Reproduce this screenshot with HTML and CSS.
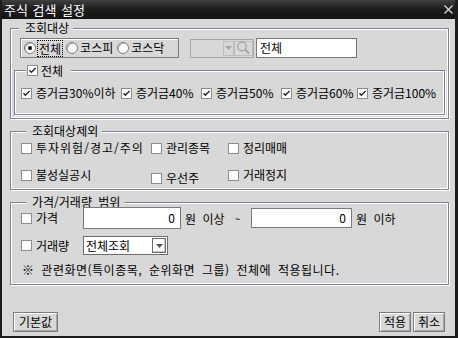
FILE: index.html
```html
<!DOCTYPE html>
<html lang="ko">
<head>
<meta charset="utf-8">
<link rel="stylesheet" href="styles.css">
</head>
<body>
<div class="window">
  <div class="titlebar">
    <span class="title">주식 검색 설정</span>
    <svg class="close" width="9" height="9" viewBox="0 0 9 9"><path d="M0.5 0.5L8.5 8.5M8.5 0.5L0.5 8.5" stroke="#dcdcdc" stroke-width="1.2"/></svg>
  </div>
  <div class="content">
    <fieldset class="group g1">
      <legend>조회대상</legend>
      <div class="market-row">
        <div class="radio-box">
          <span class="radio"><span class="rb on"></span><span class="focus">전체</span></span>
          <span class="radio"><span class="rb"></span><span>코스피</span></span>
          <span class="radio"><span class="rb"></span><span>코스닥</span></span>
        </div>
        <div class="combo">
          <span class="combo-field"></span>
          <span class="combo-arrow"><svg width="7" height="4" viewBox="0 0 7 4"><path d="M0 0H7L3.5 4Z" fill="#a4a4a4"/></svg></span>
          <span class="search-btn"><svg width="17" height="16" viewBox="0 0 17 16"><circle cx="7" cy="6.5" r="4.3" fill="none" stroke="#a2a2a2" stroke-width="1.3"/><path d="M10 9.5L14 13.5" stroke="#a2a2a2" stroke-width="2"/></svg></span>
        </div>
        <div class="textbox">전체</div>
      </div>
      <fieldset class="group inner">
        <legend class="cb-legend"><span class="cb"><svg width="9" height="9" viewBox="0 0 9 9"><path d="M1.5 4.2L3.4 6.3L7.6 2" fill="none" stroke="#222" stroke-width="1.3"/></svg></span><span>전체</span></legend>
        <div class="margin-row">
          <span class="check w100"><span class="cb"><svg width="9" height="9" viewBox="0 0 9 9"><path d="M1.5 4.2L3.4 6.3L7.6 2" fill="none" stroke="#222" stroke-width="1.3"/></svg></span><span>증거금30%이하</span></span>
          <span class="check w80"><span class="cb"><svg width="9" height="9" viewBox="0 0 9 9"><path d="M1.5 4.2L3.4 6.3L7.6 2" fill="none" stroke="#222" stroke-width="1.3"/></svg></span><span>증거금40%</span></span>
          <span class="check w80"><span class="cb"><svg width="9" height="9" viewBox="0 0 9 9"><path d="M1.5 4.2L3.4 6.3L7.6 2" fill="none" stroke="#222" stroke-width="1.3"/></svg></span><span>증거금50%</span></span>
          <span class="check w76"><span class="cb"><svg width="9" height="9" viewBox="0 0 9 9"><path d="M1.5 4.2L3.4 6.3L7.6 2" fill="none" stroke="#222" stroke-width="1.3"/></svg></span><span>증거금60%</span></span>
          <span class="check"><span class="cb"><svg width="9" height="9" viewBox="0 0 9 9"><path d="M1.5 4.2L3.4 6.3L7.6 2" fill="none" stroke="#222" stroke-width="1.3"/></svg></span><span>증거금100%</span></span>
        </div>
      </fieldset>
    </fieldset>

    <fieldset class="group g2">
      <legend>조회대상제외</legend>
      <div class="exclude-grid">
        <span class="check"><span class="cb"></span><span class="wide">투자위험/경고/주의</span></span>
        <span class="check"><span class="cb"></span><span>관리종목</span></span>
        <span class="check"><span class="cb"></span><span>정리매매</span></span>
        <span class="check"><span class="cb"></span><span>불성실공시</span></span>
        <span class="check low"><span class="cb"></span><span>우선주</span></span>
        <span class="check"><span class="cb"></span><span>거래정지</span></span>
      </div>
    </fieldset>

    <fieldset class="group g3">
      <legend>가격/거래량 범위</legend>
      <div class="price-row">
        <span class="check lbl"><span class="cb"></span><span>가격</span></span>
        <div class="num num1">0</div>
        <span class="unit1">원 이상</span>
        <span class="tilde">~</span>
        <div class="num num2">0</div>
        <span class="unit2">원 이하</span>
      </div>
      <div class="volume-row">
        <span class="check lbl"><span class="cb"></span><span>거래량</span></span>
        <div class="select">
          <span class="select-text">전체조회</span>
          <span class="select-arrow"><svg width="7" height="4" viewBox="0 0 7 4"><path d="M0 0H7L3.5 4Z" fill="#555"/></svg></span>
        </div>
      </div>
      <div class="note">※ 관련화면(특이종목, 순위화면 그룹) 전체에 적용됩니다.</div>
    </fieldset>

    <div class="footer">
      <button class="btn w-default">기본값</button>
      <div class="right-btns">
        <button class="btn w-small">적용</button>
        <button class="btn w-small">취소</button>
      </div>
    </div>
  </div>
</div>
</body>
</html>
```

FILE: styles.css
```css
* { box-sizing: border-box; }

html, body {
  margin: 0;
  padding: 0;
  background: #d8d8d8;
}

body {
  font-family: "Noto Sans CJK KR", "Noto Sans", sans-serif;
  font-size: 12px;
  color: #000;
  word-spacing: 3px;
}

.window {
  width: 458px;
  height: 338px;
  background: #d8d8d8;
  border-style: solid;
  border-color: #1c1c1c;
  border-width: 0 3px 2px 2px;
  display: flex;
  flex-direction: column;
}

.titlebar {
  height: 19px;
  flex: none;
  background: linear-gradient(#404040, #1e1e1e 45%, #141414);
  display: flex;
  align-items: center;
  justify-content: space-between;
  padding: 0 2px 0 2px;
  color: #fff;
}

.title {
  font-size: 13px;
  line-height: 19px;
  word-spacing: 1px;
}

.close { display: block; }

.content {
  padding: 3px 6px 0 8px;
  display: flex;
  flex-direction: column;
  flex: 1;
}

.group {
  margin: 0;
  padding: 0;
  min-width: 0;
  border: 1px solid #7e8292;
  box-shadow: inset 0 0 0 1px #fff, 1px 1px 0 #fff;
}

.group > legend {
  margin-left: 5px;
  padding: 0 4px 0 6px;
  line-height: 12px;
  height: 12px;
  background: #d8d8d8;
  white-space: nowrap;
}

/* group 1 */
.g1 { padding: 4px 3px 3px 3px; }

.market-row {
  display: flex;
  align-items: center;
  height: 20px;
  margin-left: 6px;
}

.radio-box {
  width: 159px;
  height: 20px;
  border: 1px solid #7c7c7c;
  box-shadow: inset 1px 1px 0 #fff;
  display: flex;
  align-items: center;
  padding-left: 3px;
}

.radio {
  display: flex;
  align-items: center;
  gap: 2px;
  margin-right: 4px;
  line-height: 14px;
}

.rb {
  width: 12px;
  height: 12px;
  border-radius: 50%;
  border: 1px solid #7a7a7a;
  background: #fff;
  box-shadow: inset 1px 1px 0 #b8b8b8;
  display: flex;
  align-items: center;
  justify-content: center;
}

.rb.on::after {
  content: "";
  width: 4px;
  height: 4px;
  border-radius: 50%;
  background: #000;
}

.focus {
  outline: 1px dotted #000;
  padding: 0 1px;
  line-height: 15px;
}

.combo {
  margin-left: 11px;
  width: 64px;
  height: 19px;
  border: 1px solid #a6a6a6;
  display: flex;
  align-items: stretch;
  background: #d8d8d8;
}

.combo-field { flex: 1; }

.combo-arrow {
  width: 11px;
  border: 1px solid #bdbdbd;
  margin: 1px 0;
  display: flex;
  align-items: center;
  justify-content: center;
}

.search-btn {
  width: 19px;
  border: 1px solid #bdbdbd;
  margin: 1px 0;
  display: flex;
  align-items: center;
  justify-content: center;
}

.textbox {
  margin-left: 2px;
  width: 101px;
  height: 20px;
  background: #fff;
  border: 1px solid #7a7a7a;
  padding-left: 3px;
  line-height: 18px;
}

.inner {
  margin-top: 6px;
  padding: 9px 3px 14px 6px;
}

.inner > legend.cb-legend {
  margin-left: 5px;
  padding: 0 8px 0 1px;
  height: 13px;
  line-height: 13px;
  display: flex;
  align-items: center;
  gap: 3px;
}

.margin-row {
  display: flex;
  align-items: center;
  height: 14px;
}

.check {
  display: flex;
  align-items: center;
  gap: 4px;
  line-height: 14px;
  white-space: nowrap;
}

.wide { letter-spacing: 1px; }

.w100 { width: 100px; }
.w80 { width: 80px; }
.w76 { width: 76px; }

.cb {
  flex: none;
  width: 11px;
  height: 11px;
  border: 1px solid #8c8c8c;
  background: #fff;
  display: flex;
  align-items: center;
  justify-content: center;
}

.cb svg { display: block; }

/* group 2 */
.g2 {
  margin-top: 6px;
  padding: 4px 3px 7px 10px;
}

.exclude-grid {
  display: grid;
  grid-template-columns: 130px 77px 1fr;
  grid-template-rows: 14px 14px;
  row-gap: 13px;
}

.check.low { position: relative; top: 3px; }

/* group 3 */
.g3 {
  margin-top: 6px;
  padding: 0 3px 7px 10px;
}

.price-row {
  display: flex;
  align-items: center;
  height: 22px;
  margin-top: -1px;
}

.lbl { width: 62px; }

.num {
  height: 22px;
  background: #fff;
  border: 1px solid #7a7a7a;
  text-align: right;
  padding-right: 5px;
  line-height: 20px;
}

.num1 { width: 98px; }
.num2 { width: 101px; height: 20px; line-height: 18px; }

.unit1 { margin-left: 4px; width: 50px; }
.tilde { width: 16px; font-size: 10px; }
.unit2 { margin-left: 4px; }

.volume-row {
  display: flex;
  align-items: center;
  height: 19px;
  margin-top: 7px;
}

.select {
  width: 85px;
  height: 19px;
  background: #fff;
  border: 1px solid #6e6e6e;
  display: flex;
  align-items: center;
  justify-content: space-between;
  padding: 0 1px 0 2px;
}

.select-text { line-height: 16px; }

.select-arrow {
  width: 14px;
  height: 15px;
  border: 1px solid #6e6e6e;
  background: #fff;
  box-shadow: inset -1px -1px 0 #c8c8c8;
  display: flex;
  align-items: center;
  justify-content: center;
}

.note {
  margin-top: 8px;
  line-height: 14px;
  padding-left: 1px;
  letter-spacing: 0.5px;
}

/* footer */
.footer {
  margin-top: 27px;
  display: flex;
  justify-content: space-between;
  align-items: center;
  padding: 0 4px 0 3px;
}

.right-btns { display: flex; gap: 2px; }

.btn {
  height: 20px;
  padding: 0;
  font-family: inherit;
  font-size: 12px;
  line-height: 16px;
  color: #000;
  background: #d8d8d8;
  border: 1px solid #7c7c7c;
  box-shadow: inset 1px 1px 0 #fff, inset -1px -1px 0 #a6a6a6;
}

.w-default { width: 45px; }
.w-small { width: 32px; }
```
